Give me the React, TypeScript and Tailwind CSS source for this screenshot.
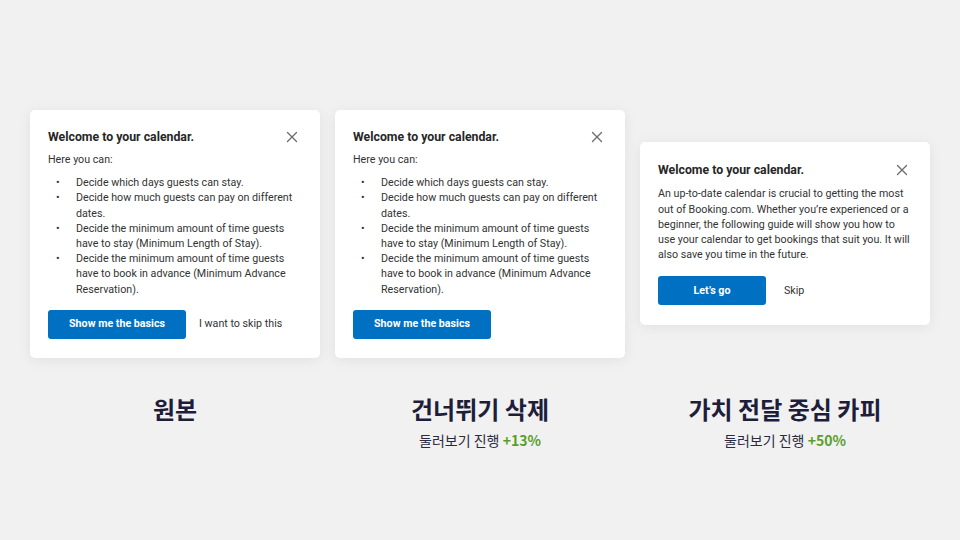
import React from "react";

const CloseIcon = () => (
  <svg width="12" height="12" viewBox="0 0 12 12" className="shrink-0">
    <path d="M1.5 1.5 L10.5 10.5 M10.5 1.5 L1.5 10.5" stroke="#6b6b6b" strokeWidth="1.3" strokeLinecap="round" />
  </svg>
);

const Header = ({ extra = false }: { extra?: boolean }) => (
  <div className={extra ? "flex items-center justify-between mr-[6px]" : "flex items-center justify-between"}>
    <div className="text-[12.3px] leading-[14px] font-bold text-[#262626]">Welcome to your calendar.</div>
    <CloseIcon />
  </div>
);

const bullets = [
  "Decide which days guests can stay.",
  "Decide how much guests can pay on different dates.",
  "Decide the minimum amount of time guests have to stay (Minimum Length of Stay).",
  "Decide the minimum amount of time guests have to book in advance (Minimum Advance Reservation).",
];

const ListCard = ({ skip }: { skip: boolean }) => (
  <div className="w-[290px] bg-white rounded-[5px] shadow-[0_2px_14px_rgba(0,0,0,0.07)] pt-[20px] pb-[19px] pl-[18px] pr-[22px]">
    <Header />
    <div className="mt-[8px] text-[10.7px] leading-[15.2px] text-[#333]">Here you can:</div>
    <ul className="mt-[8px] text-[10.7px] leading-[15.2px] text-[#333]">
      {bullets.map((b) => (
        <li key={b} className="flex">
          <span className="w-[28px] pl-[8px] shrink-0">•</span>
          <span className="pr-[4px]">{b}</span>
        </li>
      ))}
    </ul>
    <div className="mt-[13px] flex items-center">
      <div className="w-[138px] h-[29px] rounded-[3px] bg-[#0071c2] text-white text-[10.7px] font-bold flex items-center justify-center">
        Show me the basics
      </div>
      {skip && <div className="ml-[13px] text-[10.7px] text-[#333]">I want to skip this</div>}
    </div>
  </div>
);

const CopyCard = () => (
  <div className="w-[290px] bg-white rounded-[5px] shadow-[0_2px_14px_rgba(0,0,0,0.07)] pt-[21px] pb-[20px] pl-[18px] pr-[16px]">
    <Header extra />
    <p className="mt-[9px] text-[10.7px] leading-[15.2px] text-[#333]">
      An up-to-date calendar is crucial to getting the most out of Booking.com. Whether you’re experienced or a beginner, the following guide will show you how to use your calendar to get bookings that suit you. It will also save you time in the future.
    </p>
    <div className="mt-[14px] flex items-center">
      <div className="w-[108px] h-[29px] rounded-[3px] bg-[#0071c2] text-white text-[10.7px] font-bold flex items-center justify-center">
        Let’s go
      </div>
      <div className="ml-[18px] text-[10.7px] text-[#333]">Skip</div>
    </div>
  </div>
);

const Label = ({ title, pct }: { title: string; pct?: string }) => (
  <div className="w-[290px] flex flex-col items-center" style={{ fontFamily: '"Noto Sans CJK KR", "Noto Sans", sans-serif' }}>
    <div className="text-[24px] leading-[30px] font-bold text-[#1f1e3a]">{title}</div>
    {pct && (
      <div className="mt-[6px] text-[14px] leading-[20px] text-[#2b2b3d]">
        둘러보기 진행 <span className="font-bold text-[#5a9e2a]">{pct}</span>
      </div>
    )}
  </div>
);

export default function App() {
  return (
    <div className="w-[960px] h-[540px] bg-[#f1f1f1] overflow-hidden" style={{ fontFamily: 'Roboto, "Liberation Sans", sans-serif' }}>
      <div className="pt-[110px] px-[30px]">
        <div className="flex items-center gap-[15px]">
          <ListCard skip />
          <ListCard skip={false} />
          <CopyCard />
        </div>
        <div className="mt-[36px] flex gap-[15px]">
          <Label title="원본" />
          <Label title="건너뛰기 삭제" pct="+13%" />
          <Label title="가치 전달 중심 카피" pct="+50%" />
        </div>
      </div>
    </div>
  );
}
